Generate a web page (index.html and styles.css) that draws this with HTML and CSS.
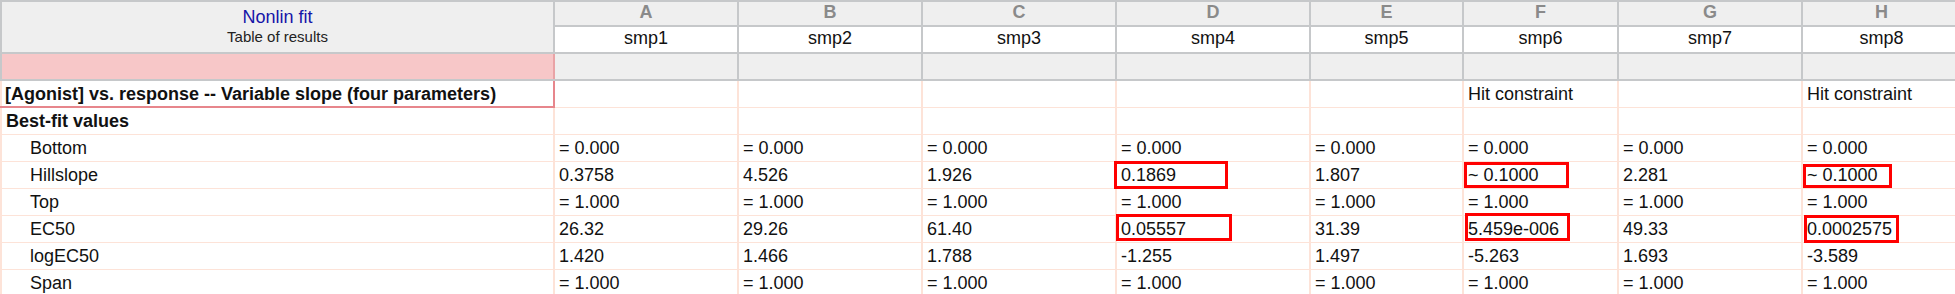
FILE: index.html
```html
<!DOCTYPE html>
<html lang="en">
<head>
    <meta charset="UTF-8">
    <title>Nonlin fit - Table of results</title>
    <link rel="stylesheet" href="styles.css">
</head>
<body>
    <table class="sheet">
        <colgroup>
            <col class="col-label">
            <col class="col-wide">
            <col class="col-wide">
            <col class="col-xwide">
            <col class="col-xwide">
            <col class="col-narrow">
            <col class="col-mid">
            <col class="col-wide">
            <col class="col-last">
        </colgroup>
        <thead>
            <tr class="letters">
                <th class="corner" rowspan="2">
                    <div class="corner-title">Nonlin fit</div>
                    <div class="corner-sub">Table of results</div>
                </th>
                <th>A</th><th>B</th><th>C</th><th>D</th><th>E</th><th>F</th><th>G</th><th>H</th>
            </tr>
            <tr class="names">
                <th>smp1</th><th>smp2</th><th>smp3</th><th>smp4</th><th>smp5</th><th>smp6</th><th>smp7</th><th>smp8</th>
            </tr>
            <tr class="blank">
                <th class="blank-label"></th>
                <th></th><th></th><th></th><th></th><th></th><th></th><th></th><th></th>
            </tr>
        </thead>
        <tbody>
            <tr>
                <td class="model">[Agonist] vs. response -- Variable slope (four parameters)</td>
                <td></td><td></td><td></td><td></td><td></td>
                <td>Hit constraint</td>
                <td></td>
                <td>Hit constraint</td>
            </tr>
            <tr>
                <td class="section">Best-fit values</td>
                <td></td><td></td><td></td><td></td><td></td><td></td><td></td><td></td>
            </tr>
            <tr>
                <td class="param">Bottom</td>
                <td>= 0.000</td><td>= 0.000</td><td>= 0.000</td><td>= 0.000</td>
                <td>= 0.000</td><td>= 0.000</td><td>= 0.000</td><td>= 0.000</td>
            </tr>
            <tr>
                <td class="param">Hillslope</td>
                <td>0.3758</td><td>4.526</td><td>1.926</td>
                <td>0.1869<span class="mark mark-d1"></span></td>
                <td>1.807</td>
                <td>~ 0.1000<span class="mark mark-f1"></span></td>
                <td>2.281</td>
                <td>~ 0.1000<span class="mark mark-h1"></span></td>
            </tr>
            <tr>
                <td class="param">Top</td>
                <td>= 1.000</td><td>= 1.000</td><td>= 1.000</td><td>= 1.000</td>
                <td>= 1.000</td><td>= 1.000</td><td>= 1.000</td><td>= 1.000</td>
            </tr>
            <tr>
                <td class="param">EC50</td>
                <td>26.32</td><td>29.26</td><td>61.40</td>
                <td>0.05557<span class="mark mark-d2"></span></td>
                <td>31.39</td>
                <td>5.459e-006<span class="mark mark-f2"></span></td>
                <td>49.33</td>
                <td>0.0002575<span class="mark mark-h2"></span></td>
            </tr>
            <tr>
                <td class="param">logEC50</td>
                <td>1.420</td><td>1.466</td><td>1.788</td><td>-1.255</td>
                <td>1.497</td><td>-5.263</td><td>1.693</td><td>-3.589</td>
            </tr>
            <tr>
                <td class="param">Span</td>
                <td>= 1.000</td><td>= 1.000</td><td>= 1.000</td><td>= 1.000</td>
                <td>= 1.000</td><td>= 1.000</td><td>= 1.000</td><td>= 1.000</td>
            </tr>
        </tbody>
    </table>
</body>
</html>
```

FILE: styles.css
```css
* {
    margin: 0;
    padding: 0;
    box-sizing: border-box;
}

body {
    background: #fff;
    color: #111;
    font-family: 'Liberation Sans', Arial, sans-serif;
    font-size: 18px;
    line-height: 20px;
    overflow: hidden;
}

/* column widths add up to the table width so nothing gets redistributed */
.sheet {
    border-collapse: collapse;
    table-layout: fixed;
    width: 1960px;
}

.col-label { width: 553px; }
.col-wide { width: 184px; }
.col-xwide { width: 194px; }
.col-narrow { width: 153px; }
.col-mid { width: 155px; }
.col-last { width: 159px; }

/* header block: grey grid */
.sheet th {
    height: 27px;
    font-weight: normal;
    line-height: 18px;
    text-align: center;
    vertical-align: middle;
    border: 2px solid #c6c8ca;
    white-space: nowrap;
}

.letters th {
    background: #efefef;
    color: #8a8a8a;
    font-weight: bold;
    height: 25px;
    padding-bottom: 3px;
}

.names th {
    background: #fff;
    color: #111;
    padding-bottom: 4px;
}

.blank th {
    background: #efefef;
}

.sheet .corner {
    background: #efefef;
    vertical-align: top;
    font-weight: normal;
    padding-bottom: 0;
}

.corner-title {
    color: #1515a8;
    font-size: 18px;
    padding-top: 5px;
    line-height: 20px;
}

.corner-sub {
    color: #222;
    font-size: 15px;
    line-height: 20px;
}

.sheet .blank-label {
    background: #f7c7c8;
    border-right-color: #e9a3a6;
}

/* results grid: pale peach lines */
.sheet td {
    position: relative;
    height: 27px;
    padding: 0 4px;
    vertical-align: middle;
    white-space: nowrap;
    border: 2px solid #fde3d8;
    border-top-width: 1px;
    border-bottom-width: 1px;
}

.sheet tbody tr:first-child td {
    border-top: 2px solid #c6c8ca;
}

.sheet .model {
    font-weight: bold;
    padding-left: 3px;
    border-right: 2px solid #e7868c;
    border-bottom: 2px solid #e7868c;
}

.section {
    font-weight: bold;
    padding-left: 3px;
}

.sheet .param {
    padding-left: 28px;
}

/* red call-out boxes drawn over suspicious values */
.mark {
    position: absolute;
    border: 3px solid #f00;
    pointer-events: none;
}

.mark-d1 { left: -3px; top: -1px; width: 114px; height: 28px; }
.mark-d2 { left: -1px; top: -2px; width: 116px; height: 27px; }
.mark-f1 { left: 0; top: 0; width: 105px; height: 26px; }
.mark-f2 { left: 1px; top: -3px; width: 105px; height: 28px; }
.mark-h1 { left: 0; top: 2px; width: 89px; height: 24px; }
.mark-h2 { left: 1px; top: -1px; width: 95px; height: 28px; }
```
